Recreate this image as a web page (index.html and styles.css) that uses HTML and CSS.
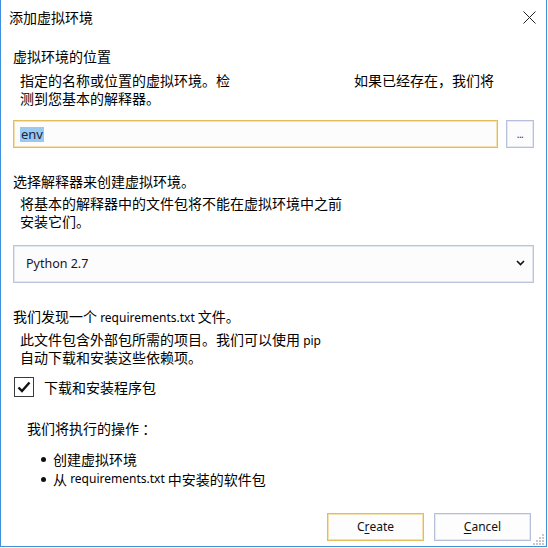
FILE: index.html
```html
<!DOCTYPE html>
<html lang="zh-CN">
<head>
<meta charset="utf-8">
<title>添加虚拟环境</title>
<link rel="stylesheet" href="styles.css">
</head>
<body>
<div class="window">
  <div class="titlebar">
    <span class="title">添加虚拟环境</span>
    <span class="close">
      <svg width="13" height="13" viewBox="0 0 13 13"><path d="M0.5 0.5 L12.5 12.5 M12.5 0.5 L0.5 12.5" stroke="#222" stroke-width="1" fill="none"/></svg>
    </span>
  </div>
  <div class="content">
    <div class="heading h-first">虚拟环境的位置</div>
    <div class="desc d1">
      <div class="line"><span class="c1">指定的名称或位置的虚拟环境。检</span><span class="c2">如果已经存在，我们将</span></div>
      <div class="line">测到您基本的解释器。</div>
    </div>
    <div class="pathrow">
      <div class="textbox"><span class="sel lt">env</span></div>
      <div class="browse">...</div>
    </div>
    <div class="heading h-second">选择解释器来创建虚拟环境。</div>
    <div class="desc d2">
      <div class="line">将基本的解释器中的文件包将不能在虚拟环境中之前</div>
      <div class="line">安装它们。</div>
    </div>
    <div class="select">
      <span class="lt sel-text">Python 2.7</span>
      <svg class="chev" width="9" height="6" viewBox="0 0 9 6"><path d="M1 1 L4.5 4.5 L8 1" stroke="#111" stroke-width="1.6" fill="none"/></svg>
    </div>
    <div class="heading h-third">我们发现一个 <span class="lt">requirements.txt</span> 文件。</div>
    <div class="desc d3">
      <div class="line">此文件包含外部包所需的项目。我们可以使用 <span class="lt">pip</span></div>
      <div class="line">自动下载和安装这些依赖项。</div>
    </div>
    <div class="checkrow">
      <span class="checkbox"><svg width="14" height="12" viewBox="0 0 14 12"><path d="M1.5 6.5 L5 10 L12.5 1.5" stroke="#111" stroke-width="2.4" fill="none"/></svg></span>
      <span class="checklabel">下载和安装程序包</span>
    </div>
    <div class="ops">我们将执行的操作 ：</div>
    <ul class="oplist">
      <li><span class="dot"></span>创建虚拟环境</li>
      <li><span class="dot"></span>从 <span class="lt">requirements.txt</span> 中安装的软件包</li>
    </ul>
    <div class="footer">
      <div class="btn btn-primary lt">C<u>r</u>eate</div>
      <div class="btn lt"><u>C</u>ancel</div>
    </div>
  </div>
  <svg class="grip" width="12" height="12" viewBox="0 0 12 12">
    <rect x="9" y="1" width="2" height="2" fill="#c8c8c8"/>
    <rect x="6" y="4" width="2" height="2" fill="#c8c8c8"/>
    <rect x="9" y="4" width="2" height="2" fill="#c8c8c8"/>
    <rect x="3" y="7" width="2" height="2" fill="#c8c8c8"/>
    <rect x="6" y="7" width="2" height="2" fill="#c8c8c8"/>
    <rect x="9" y="7" width="2" height="2" fill="#c8c8c8"/>
    <rect x="0" y="10" width="2" height="2" fill="#c8c8c8"/>
    <rect x="3" y="10" width="2" height="2" fill="#c8c8c8"/>
    <rect x="6" y="10" width="2" height="2" fill="#c8c8c8"/>
    <rect x="9" y="10" width="2" height="2" fill="#c8c8c8"/>
  </svg>
</div>
</body>
</html>
```
FILE: styles.css
```css
html, body {
  margin: 0;
  padding: 0;
  background: #ffffff;
}
body {
  font-family: "Noto Sans CJK SC", "Noto Sans", sans-serif;
  font-size: 14px;
  line-height: 18px;
  color: #000;
}
.lt {
  font-family: "Noto Sans", "Noto Sans CJK SC", sans-serif;
  font-size: 12px;
}
.window {
  position: relative;
  box-sizing: border-box;
  width: 547px;
  height: 547px;
  border-left: 1px solid #3f8fdc;
  border-right: 1px solid #3f8fdc;
  border-bottom: 1px solid #3f8fdc;
  background: #fff;
  display: flex;
  flex-direction: column;
}
.titlebar {
  height: 34px;
  display: flex;
  align-items: center;
  justify-content: space-between;
  padding: 0 10px 0 8px;
  flex: none;
}
.title {
  font-size: 14px;
}
.close {
  display: flex;
  width: 13px;
  height: 13px;
}
.content {
  flex: 1;
  display: flex;
  flex-direction: column;
  padding: 0 12px 5px 12px;
}
.heading {
  height: 18px;
  white-space: nowrap;
}
.h-first { margin-top: 13px; }
.h-second { margin-top: 24px; }
.h-third { margin-top: 24px; }
.desc {
  padding-left: 7px;
  white-space: nowrap;
}
.line {
  height: 18px;
}
.d1 { margin-top: 6px; }
.d2 { margin-top: 4px; }
.d3 { margin-top: 5px; }
.c2 { margin-left: 124px; }
.pathrow {
  margin-top: 13px;
  display: flex;
  gap: 8px;
  height: 28px;
}
.textbox {
  flex: 1;
  box-sizing: border-box;
  border: 1px solid #e3bd5c;
  box-shadow: inset 0 0 0 1px #f4e1ad;
  background: #fcfcfc;
  display: flex;
  align-items: center;
  padding-left: 6px;
}
.sel {
  background: #99c9ef;
  color: #1b2440;
  line-height: 15px;
  padding: 0 1px;
  font-size: 13px;
}
.browse {
  width: 28px;
  box-sizing: border-box;
  border: 1px solid #b7c0d9;
  box-shadow: inset 0 0 0 1px #e4e8f1;
  background: #fcfcfc;
  display: flex;
  align-items: center;
  justify-content: center;
  font-family: "Noto Sans", sans-serif;
  font-size: 10px;
  letter-spacing: -0.5px;
  color: #333;
}
.select {
  margin-top: 15px;
  height: 38px;
  box-sizing: border-box;
  border: 1px solid #bcc4dc;
  box-shadow: inset 0 0 0 1px #e1e5ef;
  background: #fcfcfc;
  display: flex;
  align-items: center;
  justify-content: space-between;
  padding: 0 8px 0 12px;
}
.sel-text {
  font-size: 12.5px;
  color: #1f1414;
}
.chev { margin-top: -3px; }
.checkrow {
  margin-top: 11px;
  height: 20px;
  display: flex;
  align-items: center;
  gap: 10px;
  padding-left: 1px;
}
.checkbox {
  width: 20px;
  height: 20px;
  box-sizing: border-box;
  border: 1px solid #3a3a3a;
  background: #fff;
  display: flex;
  align-items: center;
  justify-content: center;
}
.ops {
  margin-top: 22px;
  padding-left: 14px;
}
.oplist {
  list-style: none;
  margin: 12px 0 0 0;
  padding: 0 0 0 28px;
  line-height: 20px;
}
.oplist li {
  display: flex;
  align-items: center;
  white-space: pre;
}
.dot {
  width: 5px;
  height: 5px;
  border-radius: 50%;
  background: #111;
  margin-right: 7px;
}
.footer {
  margin-top: auto;
  display: flex;
  justify-content: flex-end;
  gap: 10px;
  padding-right: 3px;
}
.btn {
  width: 97px;
  height: 28px;
  box-sizing: border-box;
  border: 1px solid #b7c0d9;
  box-shadow: inset 0 0 0 1px #e6e9f2;
  background: #fdfdfd;
  display: flex;
  align-items: center;
  justify-content: center;
  color: #111;
}
.btn-primary {
  border-color: #e3bd5c;
  box-shadow: inset 0 0 0 1px #f4e1ad;
}
.btn u {
  text-underline-offset: 2px;
}
.grip {
  position: absolute;
  right: 1px;
  bottom: 1px;
}
```
